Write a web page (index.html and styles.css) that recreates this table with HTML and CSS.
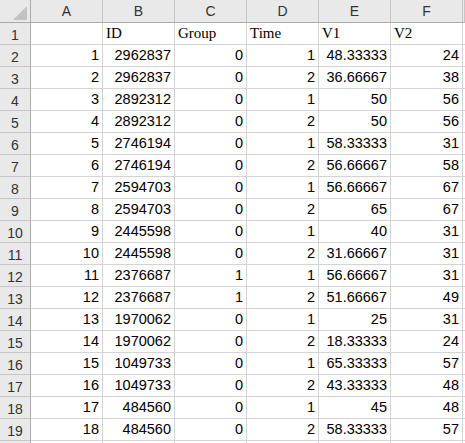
FILE: index.html
```html
<!DOCTYPE html>
<html>
<head>
<meta charset="utf-8">
<link rel="stylesheet" href="styles.css">
</head>
<body>
<div class="sheet">
  <div class="hd corner"><div class="tri"></div></div>
  <div class="hd col">A</div><div class="hd col">B</div><div class="hd col">C</div><div class="hd col">D</div><div class="hd col">E</div><div class="hd col">F</div><div class="hd col end"></div>

  <div class="hd row">1</div><div class="c"></div><div class="c t">ID</div><div class="c t">Group</div><div class="c t">Time</div><div class="c t">V1</div><div class="c t">V2</div><div class="c"></div>
  <div class="hd row">2</div><div class="c">1</div><div class="c">2962837</div><div class="c">0</div><div class="c">1</div><div class="c">48.33333</div><div class="c">24</div><div class="c"></div>
  <div class="hd row">3</div><div class="c">2</div><div class="c">2962837</div><div class="c">0</div><div class="c">2</div><div class="c">36.66667</div><div class="c">38</div><div class="c"></div>
  <div class="hd row">4</div><div class="c">3</div><div class="c">2892312</div><div class="c">0</div><div class="c">1</div><div class="c">50</div><div class="c">56</div><div class="c"></div>
  <div class="hd row">5</div><div class="c">4</div><div class="c">2892312</div><div class="c">0</div><div class="c">2</div><div class="c">50</div><div class="c">56</div><div class="c"></div>
  <div class="hd row">6</div><div class="c">5</div><div class="c">2746194</div><div class="c">0</div><div class="c">1</div><div class="c">58.33333</div><div class="c">31</div><div class="c"></div>
  <div class="hd row">7</div><div class="c">6</div><div class="c">2746194</div><div class="c">0</div><div class="c">2</div><div class="c">56.66667</div><div class="c">58</div><div class="c"></div>
  <div class="hd row">8</div><div class="c">7</div><div class="c">2594703</div><div class="c">0</div><div class="c">1</div><div class="c">56.66667</div><div class="c">67</div><div class="c"></div>
  <div class="hd row">9</div><div class="c">8</div><div class="c">2594703</div><div class="c">0</div><div class="c">2</div><div class="c">65</div><div class="c">67</div><div class="c"></div>
  <div class="hd row">10</div><div class="c">9</div><div class="c">2445598</div><div class="c">0</div><div class="c">1</div><div class="c">40</div><div class="c">31</div><div class="c"></div>
  <div class="hd row">11</div><div class="c">10</div><div class="c">2445598</div><div class="c">0</div><div class="c">2</div><div class="c">31.66667</div><div class="c">31</div><div class="c"></div>
  <div class="hd row">12</div><div class="c">11</div><div class="c">2376687</div><div class="c">1</div><div class="c">1</div><div class="c">56.66667</div><div class="c">31</div><div class="c"></div>
  <div class="hd row">13</div><div class="c">12</div><div class="c">2376687</div><div class="c">1</div><div class="c">2</div><div class="c">51.66667</div><div class="c">49</div><div class="c"></div>
  <div class="hd row">14</div><div class="c">13</div><div class="c">1970062</div><div class="c">0</div><div class="c">1</div><div class="c">25</div><div class="c">31</div><div class="c"></div>
  <div class="hd row">15</div><div class="c">14</div><div class="c">1970062</div><div class="c">0</div><div class="c">2</div><div class="c">18.33333</div><div class="c">24</div><div class="c"></div>
  <div class="hd row">16</div><div class="c">15</div><div class="c">1049733</div><div class="c">0</div><div class="c">1</div><div class="c">65.33333</div><div class="c">57</div><div class="c"></div>
  <div class="hd row">17</div><div class="c">16</div><div class="c">1049733</div><div class="c">0</div><div class="c">2</div><div class="c">43.33333</div><div class="c">48</div><div class="c"></div>
  <div class="hd row">18</div><div class="c">17</div><div class="c">484560</div><div class="c">0</div><div class="c">1</div><div class="c">45</div><div class="c">48</div><div class="c"></div>
  <div class="hd row">19</div><div class="c">18</div><div class="c">484560</div><div class="c">0</div><div class="c">2</div><div class="c">58.33333</div><div class="c">57</div><div class="c"></div>
  <div class="hd row"></div><div class="c"></div><div class="c"></div><div class="c"></div><div class="c"></div><div class="c"></div><div class="c"></div><div class="c"></div>
</div>
</body>
</html>
```
FILE: styles.css
```css
html, body {
  margin: 0;
  padding: 0;
  background: #ffffff;
  overflow: hidden;
}
.sheet {
  display: grid;
  width: 100vw;
  height: 100vh;
  grid-template-columns: 31px repeat(6, 72px) minmax(0, 1fr);
  grid-template-rows: 23px repeat(19, 22px) minmax(0, 1fr);
  font-family: "Liberation Sans", Arial, sans-serif;
  color: #000;
  overflow: hidden;
}
.c {
  box-sizing: border-box;
  border-right: 1px solid #d4d4d4;
  border-bottom: 1px solid #d4d4d4;
  display: flex;
  align-items: flex-end;
  justify-content: flex-end;
  padding: 0 3px 2px 3px;
  font-size: 14.5px;
  line-height: 17px;
  white-space: nowrap;
  overflow: hidden;
  min-width: 0;
  min-height: 0;
}
.c.t {
  justify-content: flex-start;
  font-family: "Liberation Serif", "Times New Roman", serif;
  font-size: 15px;
  padding-left: 3px;
}
.hd {
  box-sizing: border-box;
  background: #e9e9e9;
  color: #333;
  display: flex;
  align-items: center;
  justify-content: center;
  font-family: "Liberation Sans", Arial, sans-serif;
  font-size: 14px;
  overflow: hidden;
  min-width: 0;
  min-height: 0;
}
.col {
  border-right: 1px solid #c6c6c6;
  border-bottom: 1px solid #ababab;
}
.row {
  border-right: 1px solid #ababab;
  border-bottom: 1px solid #c6c6c6;
  padding-top: 2px;
}
.corner {
  border-right: 1px solid #ababab;
  border-bottom: 1px solid #ababab;
  justify-content: flex-end;
  align-items: flex-end;
  padding: 0 3px 2px 0;
}
.tri {
  width: 14px;
  height: 14px;
  background: #c2c2c2;
  clip-path: polygon(100% 0, 100% 100%, 0 100%);
}
```
